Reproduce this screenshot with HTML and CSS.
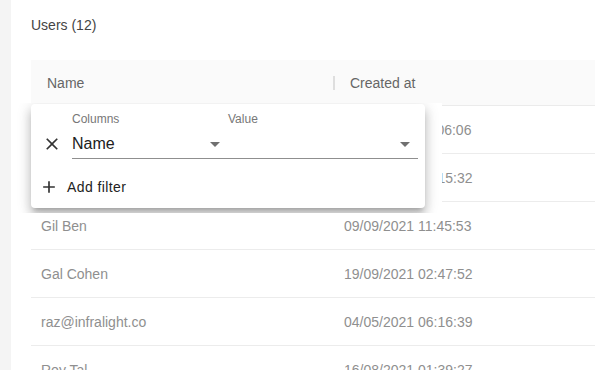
FILE: index.html
```html
<!DOCTYPE html>
<html>
<head>
<meta charset="utf-8">
<link rel="stylesheet" href="styles.css">
</head>
<body>
<div class="panel">
  <div class="title">Users (12)</div>
  <div class="grid">
    <div class="head">
      <div class="hcell c1">Name</div>
      <div class="hcell c2"><span class="sep"></span>Created at</div>
    </div>
    <div class="row"><div class="cell c1">Daniel Levi</div><div class="cell c2">11/10/2021 09:06:06</div></div>
    <div class="row"><div class="cell c1">Noa Katz</div><div class="cell c2">02/08/2021 10:15:32</div></div>
    <div class="row"><div class="cell c1">Gil Ben</div><div class="cell c2">09/09/2021 11:45:53</div></div>
    <div class="row"><div class="cell c1">Gal Cohen</div><div class="cell c2">19/09/2021 02:47:52</div></div>
    <div class="row"><div class="cell c1">raz@infralight.co</div><div class="cell c2">04/05/2021 06:16:39</div></div>
    <div class="row"><div class="cell c1">Roy Tal</div><div class="cell c2">16/08/2021 01:39:27</div></div>
  </div>

  <div class="popper">
    <div class="paper">
      <div class="filter-row">
        <span class="close">
          <svg width="20" height="20" viewBox="0 0 24 24"><path d="M19 6.41L17.59 5 12 10.59 6.41 5 5 6.41 10.59 12 5 17.59 6.41 19 12 13.41 17.59 19 19 17.59 13.41 12z"/></svg>
        </span>
        <div class="control col-control">
          <div class="label">Columns</div>
          <div class="input"><span>Name</span><svg class="arrow" width="10" height="5" viewBox="0 0 10 5"><polygon points="0,0 10,0 5,5"/></svg></div>
        </div>
        <div class="control val-control">
          <div class="label">Value</div>
          <div class="input"><span></span><svg class="arrow" width="10" height="5" viewBox="0 0 10 5"><polygon points="0,0 10,0 5,5"/></svg></div>
        </div>
      </div>
      <div class="add">
        <svg width="20" height="20" viewBox="0 0 24 24"><path d="M19 13h-6v6h-2v-6H5v-2h6V5h2v6h6v2z"/></svg>
        <span>Add filter</span>
      </div>
    </div>
  </div>
</div>
</body>
</html>
```

FILE: styles.css
```css
html, body {
  margin: 0;
  padding: 0;
}
body {
  background: #f4f4f4;
  width: 595px;
  height: 370px;
  overflow: hidden;
  font-family: "Liberation Sans", Arial, sans-serif;
}
.panel {
  position: relative;
  margin-left: 11px;
  width: 640px;
  height: 370px;
  background: #fff;
  padding-left: 20px;
  box-sizing: border-box;
}
.title {
  padding-top: 17px;
  font-size: 14px;
  line-height: 16px;
  color: #444;
}
.grid {
  margin-top: 27px;
}
.head {
  display: flex;
  height: 45px;
  background: #fafafa;
  border-bottom: 1px solid #ebebeb;
}
.hcell {
  display: flex;
  align-items: center;
  font-size: 14px;
  color: #666;
}
.head .c1 {
  width: 302px;
  padding-left: 16px;
  box-sizing: border-box;
}
.sep {
  width: 2px;
  height: 14px;
  background: #dedede;
  margin-right: 15px;
}
.row {
  display: flex;
  height: 47px;
  border-bottom: 1px solid #ececec;
  align-items: center;
}
.cell {
  font-size: 14px;
  color: #8f8f8f;
}
.row .c1 {
  width: 303px;
  padding-left: 10px;
  box-sizing: border-box;
}
.row .c2 {
  padding-left: 10px;
}
.popper {
  position: absolute;
  left: 0;
  top: 103px;
  width: 431px;
  height: 110px;
  background: #fff;
  overflow: hidden;
}
.paper {
  margin: 1px 0 0 20px;
  width: 394px;
  height: 104px;
  border-radius: 4px;
  background: #fff;
  box-shadow: 0 5px 5px -3px rgba(0,0,0,0.2), 0 8px 10px 1px rgba(0,0,0,0.14), 0 3px 14px 2px rgba(0,0,0,0.12);
  box-sizing: border-box;
  padding-top: 8px;
}
.filter-row {
  display: flex;
  align-items: flex-end;
}
.close {
  display: flex;
  margin: 0 10px 5px 11px;
  fill: #333;
}
.control {
  display: flex;
  flex-direction: column;
}
.col-control { width: 156px; }
.val-control { width: 190px; }
.label {
  font-size: 12px;
  line-height: 14px;
  color: #777;
}
.input {
  margin-top: 5px;
  height: 28px;
  line-height: 25px;
  padding-bottom: 3px;
  box-sizing: border-box;
  border-bottom: 1px solid #8f8f8f;
  display: flex;
  justify-content: space-between;
  align-items: center;
  font-size: 16px;
  color: #212121;
  padding-right: 8px;
}
.arrow {
  fill: #707070;
  margin-top: 2px;
}
.add {
  display: flex;
  align-items: center;
  margin-top: 12px;
  padding-left: 8px;
  height: 32px;
  gap: 8px;
  font-size: 14px;
  letter-spacing: 0.4px;
  color: #222;
  fill: #333;
}
```
